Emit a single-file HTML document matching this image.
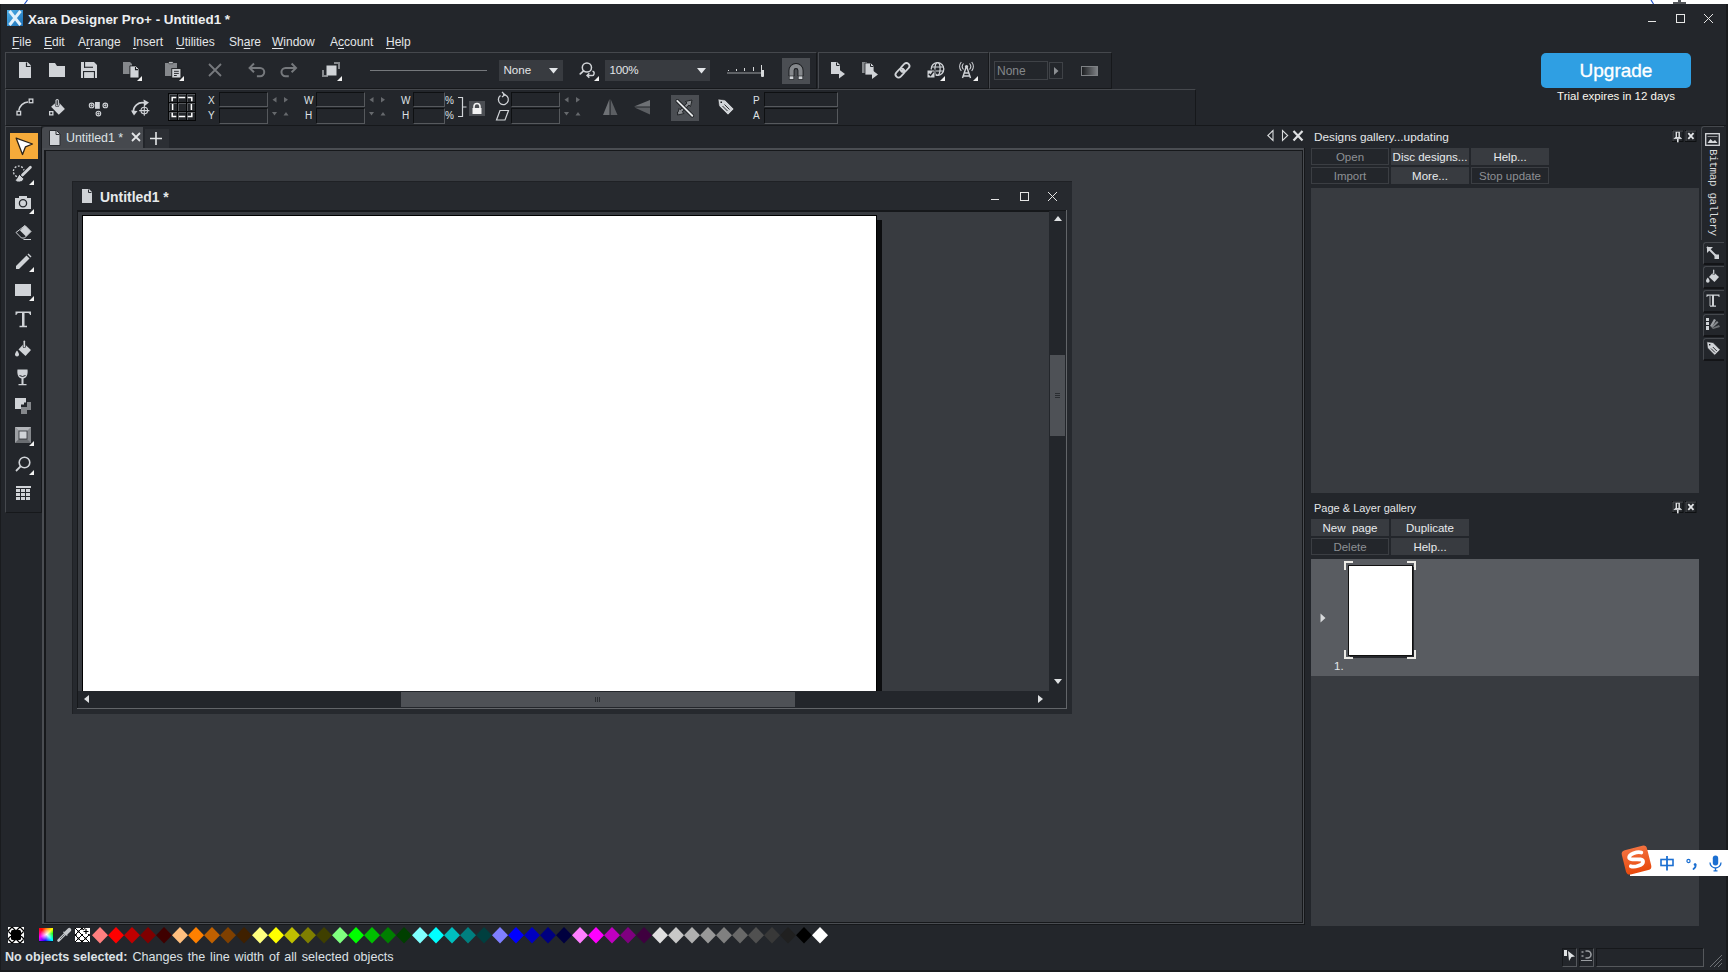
<!DOCTYPE html>
<html><head><meta charset="utf-8">
<style>
*{box-sizing:border-box;margin:0;padding:0}
html,body{width:1728px;height:972px;overflow:hidden;background:#23262b;font-family:"Liberation Sans",sans-serif;color:#dfe3e7}
.a{position:absolute}
.t{position:absolute;white-space:pre;line-height:1}
.fld{position:absolute;background:#23262b;border-top:1px solid #0e1012;border-left:1px solid #0e1012;border-bottom:1px solid #56595d;border-right:1px solid #56595d}
svg{position:absolute;overflow:visible}
.u{text-decoration:underline;text-underline-offset:2px;text-decoration-thickness:1px}
.btn{position:absolute;background:#383b40;font-size:11.5px;text-align:center;line-height:18.5px;color:#e8ebee;white-space:pre}
.dis{color:#8d9094;background:#23262b;border:1px solid #3b3e43;line-height:16.5px}
.lt{background:#4a4d52}
</style></head><body>

<div class="a" style="left:0;top:0;width:1728px;height:4px;background:#fff"></div>
<svg style="left:0;top:0" width="1728" height="4"><path d="M24.5 4L27.5 0M1651 0L1653.5 4" stroke="#2456c8" stroke-width="1.2"/><rect x="1673" y="2" width="13" height="2" fill="#55585c"/><rect x="1678" y="0" width="3" height="2" fill="#55585c"/></svg>
<div class="a" style="left:0;top:4px;width:1px;height:968px;background:#191b1e"></div>
<div class="a" style="left:1726px;top:4px;width:2px;height:968px;background:#191b1e"></div>
<div class="a" style="left:0;top:970px;width:1728px;height:2px;background:#191b1e"></div>
<svg style="left:7px;top:10px" width="16" height="16"><defs><linearGradient id="lg" x1="0" y1="0" x2="1" y2="1"><stop offset="0" stop-color="#4fb0e8"/><stop offset="1" stop-color="#1b6fb6"/></linearGradient></defs>
<rect width="16" height="16" fill="url(#lg)"/><path d="M2.5 1 L8 8 L2.5 15 M13.5 1 L8 8 L13.5 15" stroke="#e2f1fb" stroke-width="3" fill="none"/></svg>
<div class="t" style="left:28px;top:12.5px;font-size:13.4px;font-weight:bold;color:#eceef0">Xara Designer Pro+ - Untitled1 *</div>
<div class="a" style="left:1648px;top:21px;width:8px;height:1px;background:#e6e6e6"></div>
<div class="a" style="left:1676px;top:14px;width:9px;height:9px;border:1px solid #e6e6e6"></div>
<svg style="left:1704px;top:14px" width="9" height="9"><path d="M0 0L9 9M9 0L0 9" stroke="#e6e6e6" stroke-width="1"/></svg>
<div class="t" style="left:12px;top:36px;font-size:12px;color:#e3e6e9"><span class="u">F</span>ile</div>
<div class="t" style="left:44px;top:36px;font-size:12px;color:#e3e6e9"><span class="u">E</span>dit</div>
<div class="t" style="left:78px;top:36px;font-size:12px;color:#e3e6e9">A<span class="u">r</span>range</div>
<div class="t" style="left:133px;top:36px;font-size:12px;color:#e3e6e9"><span class="u">I</span>nsert</div>
<div class="t" style="left:176px;top:36px;font-size:12px;color:#e3e6e9"><span class="u">U</span>tilities</div>
<div class="t" style="left:229px;top:36px;font-size:12px;color:#e3e6e9">Sh<span class="u">a</span>re</div>
<div class="t" style="left:272px;top:36px;font-size:12px;color:#e3e6e9"><span class="u">W</span>indow</div>
<div class="t" style="left:330px;top:36px;font-size:12px;color:#e3e6e9">A<span class="u">c</span>count</div>
<div class="t" style="left:386px;top:36px;font-size:12px;color:#e3e6e9"><span class="u">H</span>elp</div>
<div class="a" style="left:5px;top:52px;width:812px;height:37px;border-top:1px solid #45484d;border-left:1px solid #45484d;border-bottom:1px solid #16181b;border-right:1px solid #16181b"></div>
<div class="a" style="left:818px;top:52px;width:171px;height:37px;border-top:1px solid #45484d;border-left:1px solid #45484d;border-bottom:1px solid #16181b;border-right:1px solid #16181b"></div>
<div class="a" style="left:989px;top:52px;width:123px;height:37px;border-top:1px solid #45484d;border-left:1px solid #45484d;border-bottom:1px solid #16181b;border-right:1px solid #16181b"></div>
<div class="a" style="left:5px;top:89px;width:1191px;height:37px;border-top:1px solid #45484d;border-left:1px solid #45484d;border-bottom:1px solid #16181b;border-right:1px solid #16181b"></div>
<div class="a" style="left:1196px;top:125px;width:530px;height:1px;background:#16181b"></div>
<div class="a" style="left:1541px;top:53px;width:150px;height:35px;background:#2f9fe3;border-radius:5px"></div>
<div class="t" style="left:1541px;top:61px;width:150px;text-align:center;font-size:19px;color:#fff;-webkit-text-stroke:0.35px #fff">Upgrade</div>
<div class="t" style="left:1541px;top:91px;width:150px;text-align:center;font-size:11.5px;color:#fbf7ee">Trial expires in 12 days</div>
<div class="a" style="left:5px;top:126px;width:37px;height:387px;border-top:1px solid #45484d;border-left:1px solid #45484d;border-bottom:1px solid #16181b;border-right:1px solid #16181b"></div>
<div class="a" style="left:10px;top:133px;width:28px;height:26px;background:#f6ab3a"></div>
<svg style="left:15px;top:137px" width="19" height="19"><path d="M1.2 1.2L17.5 7L10.5 9.8L7.5 17.5Z" fill="#fff" stroke="#2a2218" stroke-width="1.3" stroke-linejoin="round"/></svg>
<svg style="left:13px;top:166px" width="20" height="18"><circle cx="5.8" cy="5.5" r="5.4" stroke="#d0d3d7" stroke-width="1.3" stroke-dasharray="1.9 1.5" fill="none"/><path d="M9 9.6L17.6 1.1" stroke="#23262b" stroke-width="4.8" stroke-linecap="round"/><path d="M9.5 9.1L17.4 1.3" stroke="#d0d3d7" stroke-width="2.8" stroke-linecap="round"/><path d="M6.4 8.4L10.8 12.8C10.2 15.5 7 16.5 4.5 15.9L1.8 14.3C4 13.5 4.3 10.5 6.4 8.4Z" fill="#d0d3d7" stroke="#23262b" stroke-width="0.9"/></svg><svg style="left:29px;top:180px" width="5" height="5"><path d="M5 0V5H0Z" fill="#f2f2f2"/></svg>
<svg style="left:15px;top:196px" width="17" height="14"><path d="M4 0H12V2H16V13H0V2H4Z" fill="#d0d3d7"/><circle cx="8" cy="7.3" r="3.6" stroke="#23262b" stroke-width="1.3" fill="none"/></svg><svg style="left:29px;top:209px" width="5" height="5"><path d="M5 0V5H0Z" fill="#f2f2f2"/></svg>
<svg style="left:15px;top:225px" width="17" height="16"><path d="M10 0.5L16 6.5L9.5 13H6.5L1 7.5Z" fill="none" stroke="#d0d3d7" stroke-width="1"/><path d="M10 0.5L16 6.5L11 11.5L5 5.5Z" fill="#d0d3d7"/><path d="M8.5 14.5H16" stroke="#d0d3d7" stroke-width="1"/></svg>
<svg style="left:15px;top:253px" width="17" height="17"><path d="M1 13L11.5 2.5L14.5 5.5L4 16H1Z" fill="#d0d3d7"/><path d="M12.5 1.5L13.5 0.5L16.5 3.5L15.5 4.5Z" fill="#d0d3d7"/></svg><svg style="left:29px;top:267px" width="5" height="5"><path d="M5 0V5H0Z" fill="#f2f2f2"/></svg>
<svg style="left:15px;top:284px" width="17" height="13"><rect x="0" y="0" width="16" height="12" fill="#d0d3d7"/></svg><svg style="left:29px;top:296px" width="5" height="5"><path d="M5 0V5H0Z" fill="#f2f2f2"/></svg>
<svg style="left:15px;top:311px" width="17" height="17"><path d="M0.5 0.5H16V4H15C14.8 2.5 14 2 12 2H9.5V14.8H12V16.3H4.5V14.8H7V2H4.5C2.5 2 1.7 2.5 1.5 4H0.5Z" fill="#d0d3d7"/></svg>
<svg style="left:15px;top:340px" width="17" height="17"><path d="M9 3.5L16 10L10.5 16L3.5 9.5Z" fill="#d0d3d7"/><rect x="7.8" y="0" width="3" height="8" rx="1.5" fill="#23262b"/><rect x="8.5" y="0.5" width="1.6" height="7" rx="0.8" fill="#d0d3d7"/><path d="M2 10.5C0.5 12.5 0 13.5 0 14.5A2 2 0 0 0 4 14.5C4 13.5 3.5 12.5 2 10.5Z" fill="#d0d3d7"/></svg>
<svg style="left:17px;top:369px" width="12" height="17"><path d="M0.5 0.5H10.5C11 4 10.5 8.5 6.5 9.5V15H9.5V16.3H1.5V15H4.5V9.5C0.5 8.5 0 4 0.5 0.5Z" fill="#d0d3d7"/><path d="M2.5 6.5Q5.5 8.5 8.5 6.5" stroke="#23262b" stroke-width="1" fill="none"/></svg>
<svg style="left:15px;top:398px" width="17" height="17"><path d="M6 9H12V4H16V12H12V16H6Z" fill="#85888c"/><path d="M0 0H11V4.5H9V6.5H6V11H0Z" fill="#d0d3d7"/></svg>
<svg style="left:15px;top:427px" width="17" height="17"><rect x="0" y="0" width="16" height="16" fill="#85888c"/><path d="M0 0L16 0L12 4H4Z" fill="#b3b6ba"/><path d="M0 0L4 4V12L0 16Z" fill="#9da0a4"/><path d="M0 16L4 12H12L16 16Z" fill="#6a6d71"/><rect x="4" y="4" width="8" height="8" fill="#d0d3d7" stroke="#2c2f33" stroke-width="0.8"/></svg><svg style="left:29px;top:441px" width="5" height="5"><path d="M5 0V5H0Z" fill="#f2f2f2"/></svg>
<svg style="left:15px;top:456px" width="17" height="17"><circle cx="9.5" cy="6.5" r="5.3" stroke="#d0d3d7" stroke-width="1.6" fill="none"/><path d="M5.8 10.2L1 15" stroke="#d0d3d7" stroke-width="1.8"/></svg><svg style="left:29px;top:470px" width="5" height="5"><path d="M5 0V5H0Z" fill="#f2f2f2"/></svg>
<svg style="left:16px;top:486px" width="15" height="15"><rect x="0" y="0" width="15" height="2" fill="#d0d3d7"/><rect x="0" y="3" width="4" height="3" fill="#d0d3d7"/><rect x="5" y="3" width="4" height="3" fill="#d0d3d7"/><rect x="10" y="3" width="4" height="3" fill="#d0d3d7"/><rect x="0" y="7" width="4" height="3" fill="#d0d3d7"/><rect x="5" y="7" width="4" height="3" fill="#d0d3d7"/><rect x="10" y="7" width="4" height="3" fill="#d0d3d7"/><rect x="0" y="11" width="4" height="3" fill="#d0d3d7"/><rect x="5" y="11" width="4" height="3" fill="#d0d3d7"/><rect x="10" y="11" width="4" height="3" fill="#d0d3d7"/></svg>
<div class="a" style="left:42px;top:127px;width:101px;height:22px;background:#46494e;border-radius:3px 0 0 0"></div>
<svg style="left:49px;top:130px" width="12" height="16"><path d="M0.5 0.5H7.5L11 4V15.5H0.5Z" fill="#d0d3d7" stroke="#2a2d31" stroke-width="1"/><path d="M7 1V4.5H10.5" stroke="#2a2d31" stroke-width="1" fill="none"/></svg>
<div class="t" style="left:66px;top:131.5px;font-size:12.4px;color:#dde1e5">Untitled1 *</div>
<svg style="left:131px;top:132px" width="10" height="10"><path d="M1 1L9 9M9 1L1 9" stroke="#e3e5e7" stroke-width="1.8"/></svg>
<div class="a" style="left:145px;top:129px;width:24px;height:20px;background:#2c2f34"></div>
<svg style="left:150px;top:132px" width="12" height="13"><path d="M6 0V13M0 6.5H12" stroke="#e3e5e7" stroke-width="1.6"/></svg>
<svg style="left:1267px;top:130px" width="40" height="12"><path d="M6 0.5V10.5L0.8 5.5Z" stroke="#d8dadc" stroke-width="1.1" fill="none"/><path d="M15.5 0.5V10.5L20.7 5.5Z" stroke="#d8dadc" stroke-width="1.1" fill="none"/><path d="M26.5 1L35.5 10.5M35.5 1L26.5 10.5" stroke="#dfe1e3" stroke-width="2.2"/></svg>
<div class="a" style="left:42px;top:148px;width:1263px;height:777px;background:#16181b"></div>
<div class="a" style="left:42px;top:148px;width:1262px;height:776px;background:#4a4d52"></div>
<div class="a" style="left:44px;top:150px;width:1259px;height:773px;background:#16181b"></div>
<div class="a" style="left:46px;top:151px;width:1256px;height:771px;background:#383b40"></div>
<div class="a" style="left:72px;top:181px;width:1000px;height:533px;background:#26292e;border-top:1px solid #1f2125;border-left:1px solid #1f2125"></div>
<svg style="left:82px;top:189px" width="11" height="15"><path d="M0 0H7L10 3V14H0Z" fill="#d0d3d7"/><path d="M6.5 0.5V3.5H9.5" stroke="#2a2d32" stroke-width="1" fill="none"/></svg>
<div class="t" style="left:100px;top:190.5px;font-size:13.9px;font-weight:bold;color:#e6e9ec">Untitled1 *</div>
<div class="a" style="left:991px;top:199px;width:8px;height:1px;background:#e6e6e6"></div>
<div class="a" style="left:1020px;top:192px;width:9px;height:9px;border:1px solid #e6e6e6"></div>
<svg style="left:1048px;top:192px" width="9" height="9"><path d="M0 0L9 9M9 0L0 9" stroke="#e6e6e6" stroke-width="1"/></svg>
<div class="a" style="left:77px;top:210px;width:990px;height:499px;background:#626569"></div>
<div class="a" style="left:77px;top:210px;width:989px;height:498px;background:#16181b"></div>
<div class="a" style="left:78px;top:212px;width:988px;height:496px;background:#383b40"></div>
<div class="a" style="left:877px;top:220px;width:5px;height:471px;background:#0c0d0f"></div>
<div class="a" style="left:82px;top:215px;width:795px;height:476px;background:#fff;border-left:1px solid #000;border-top:1px solid #000;border-right:1px solid #000"></div>
<div class="a" style="left:1049px;top:211px;width:17px;height:480px;background:#23262b"></div>
<div class="a" style="left:78px;top:691px;width:988px;height:17px;background:#23262b"></div>
<div class="a" style="left:1050px;top:355px;width:15px;height:81px;background:#4e5156"></div>
<svg style="left:1055px;top:393px" width="5" height="6"><path d="M0 0.5H5M0 2.5H5M0 4.5H5" stroke="#2a2d31" stroke-width="1"/></svg>
<div class="a" style="left:401px;top:692px;width:394px;height:15px;background:#4e5156"></div>
<svg style="left:595px;top:697px" width="6" height="5"><path d="M0.5 0V5M2.5 0V5M4.5 0V5" stroke="#2a2d31" stroke-width="1"/></svg>
<svg style="left:1054px;top:216px" width="8" height="6"><path d="M0 5H8L4 0Z" fill="#dfe1e3"/></svg>
<svg style="left:1054px;top:679px" width="8" height="6"><path d="M0 0H8L4 5Z" fill="#dfe1e3"/></svg>
<svg style="left:84px;top:695px" width="6" height="8"><path d="M5 0V8L0 4Z" fill="#dfe1e3"/></svg>
<svg style="left:1038px;top:695px" width="6" height="8"><path d="M0 0V8L5 4Z" fill="#dfe1e3"/></svg>
<svg style="left:19px;top:62px" width="13" height="16"><path d="M0 0H8.5L12 3.5V16H0Z" fill="#d0d3d7"/><path d="M7.5 0.5V4.5H11.5" stroke="#23262b" stroke-width="1.2" fill="none"/></svg>
<svg style="left:49px;top:63px" width="16" height="15"><path d="M0 0H6L8 3H16V14H0Z" fill="#d0d3d7"/></svg>
<svg style="left:81px;top:62px" width="16" height="16"><path d="M0 0H13L16 3V16H0Z" fill="#d0d3d7"/><rect x="3" y="0" width="1.1" height="5.7" fill="#23262b"/><rect x="3" y="4.7" width="9" height="1.1" fill="#23262b"/><rect x="2" y="9" width="12" height="1.1" fill="#23262b"/><rect x="2" y="9" width="1.1" height="7" fill="#23262b"/><rect x="12.9" y="9" width="1.1" height="7" fill="#23262b"/></svg>
<svg style="left:123px;top:62px" width="17" height="17"><path d="M0 0H7L9 2V12H0Z" fill="#85888c"/><path d="M3.2 0.5V3.2" stroke="#23262b" stroke-width="0"/><path d="M6.9 3.9H13L16 6.9V16H6.9Z" fill="#d0d3d7" stroke="#17191c" stroke-width="0.9"/><path d="M12.5 5V7.6H15" stroke="#17191c" stroke-width="1.1" fill="none"/></svg><svg style="left:137px;top:76px" width="5" height="5"><path d="M5 0V5H0Z" fill="#f2f2f2"/></svg>
<svg style="left:165px;top:62px" width="17" height="17"><rect x="0" y="1" width="12" height="13" fill="#85888c"/><rect x="3.6" y="-0.3" width="4.6" height="2" rx="0.8" fill="#d0d3d7" stroke="#17191c" stroke-width="0.6"/><rect x="6.75" y="6.6" width="9.2" height="9.4" fill="#d0d3d7" stroke="#17191c" stroke-width="0.9"/><path d="M9 9.3H13.8M9 11.4H13.8M9 13.5H11.8" stroke="#17191c" stroke-width="0.9"/></svg><svg style="left:179px;top:76px" width="5" height="5"><path d="M5 0V5H0Z" fill="#f2f2f2"/></svg>
<svg style="left:208px;top:63px" width="14" height="14"><path d="M1 1L13 13M13 1L1 13" stroke="#76797d" stroke-width="1.8"/></svg>
<svg style="left:244px;top:58px" width="60" height="24"><path d="M10 5.5L5.6 9.9L10 14.3M5.6 9.9H16.1A4.15 4.15 0 0 1 16.1 18.2H12.9" stroke="#76797d" stroke-width="2" fill="none"/><path d="M47.6 5.5L52 9.9L47.6 14.3M52 9.9H41.6A4.15 4.15 0 0 0 41.6 18.2H44.8" stroke="#76797d" stroke-width="2" fill="none"/></svg>
<svg style="left:323px;top:62px" width="19" height="19"><path d="M0 8V14H5" stroke="#85888c" stroke-width="2" fill="none"/><path d="M11 1H16V7" stroke="#85888c" stroke-width="2" fill="none"/><rect x="3.5" y="3.5" width="10" height="10" fill="#d0d3d7"/></svg><svg style="left:337px;top:76px" width="5" height="5"><path d="M5 0V5H0Z" fill="#f2f2f2"/></svg>
<div class="a" style="left:370px;top:70px;width:117px;height:1px;background:#75787c"></div>
<div class="a" style="left:499px;top:60px;width:64px;height:21px;background:#383b40"></div>
<div class="t" style="left:503.5px;top:63.8px;font-size:11.6px;color:#e3e6e9">None</div>
<svg style="left:549px;top:68px" width="9" height="6"><path d="M0 0H9L4.5 5.5Z" fill="#e3e6e9"/></svg>
<svg style="left:578px;top:60px" width="20" height="20"><circle cx="8.9" cy="7.5" r="4.6" stroke="#d0d3d7" stroke-width="1.5" fill="none"/><path d="M5.6 10.8L2.3 13.8" stroke="#d0d3d7" stroke-width="1.8" stroke-linecap="round"/><path d="M14.5 11.2A2.2 2.2 0 0 1 13.3 15.5H9.5M11.3 13.3L9 15.5L11.3 17.7" stroke="#d0d3d7" stroke-width="1.4" fill="none"/></svg><svg style="left:594px;top:76px" width="5" height="5"><path d="M5 0V5H0Z" fill="#f2f2f2"/></svg>
<div class="a" style="left:605px;top:60px;width:105px;height:21px;background:#383b40"></div>
<div class="t" style="left:609.5px;top:63.8px;font-size:11.6px;color:#e3e6e9;letter-spacing:-0.2px">100%</div>
<svg style="left:697px;top:68px" width="9" height="6"><path d="M0 0H9L4.5 5.5Z" fill="#e3e6e9"/></svg>
<div class="a" style="left:727px;top:72px;width:35px;height:2px;background:#5e6165"></div>
<div class="a" style="left:728px;top:70px;width:1px;height:1px;background:#d8dadc"></div>
<div class="a" style="left:736px;top:69px;width:1px;height:2px;background:#d8dadc"></div>
<div class="a" style="left:744px;top:68px;width:1px;height:3px;background:#d8dadc"></div>
<div class="a" style="left:753px;top:67px;width:1px;height:4px;background:#d8dadc"></div>
<div class="a" style="left:761px;top:65px;width:1px;height:5px;background:#d8dadc"></div>
<div class="a" style="left:761px;top:70px;width:3px;height:7px;background:#d8dadc;border-radius:0 0 1px 1px"></div>
<div class="a" style="left:782px;top:58px;width:28px;height:26px;background:#4b4e53"></div>
<svg style="left:787px;top:62px" width="18" height="18"><path d="M4.5 14V8.5A4.5 4.5 0 0 1 13.5 8.5V14" stroke="#17191c" stroke-width="6" fill="none"/><path d="M4.5 14V8.5A4.5 4.5 0 0 1 13.5 8.5V14" stroke="#85888c" stroke-width="4.2" fill="none"/><rect x="2.2" y="14" width="4.6" height="3.3" fill="#d0d3d7" stroke="#17191c" stroke-width="0.6"/><rect x="11.2" y="14" width="4.6" height="3.3" fill="#d0d3d7" stroke="#17191c" stroke-width="0.6"/></svg>
<svg style="left:831px;top:62px" width="15" height="17"><path d="M0 0H6L9 3V12H0Z" fill="#d0d3d7"/><path d="M5.5 0.5V3.5H8.5" stroke="#23262b" stroke-width="1" fill="none"/><path d="M8 7.5L14 12L8 16.5Z" fill="#d0d3d7"/></svg>
<svg style="left:862px;top:62px" width="16" height="17"><path d="M0 0H5V11H0Z" fill="#85888c"/><path d="M3 1H9L12 4V13H3Z" fill="#d0d3d7" stroke="#23262b" stroke-width="0.8"/><path d="M8.5 1.5V4.5H11.5" stroke="#23262b" stroke-width="1" fill="none"/><path d="M10 8L16 12.5L10 17Z" fill="#d0d3d7"/></svg>
<svg style="left:894px;top:62px" width="17" height="17"><path d="M7 10L10 7" stroke="#d0d3d7" stroke-width="1.8"/><rect x="8" y="0.5" width="6" height="10" rx="3" transform="rotate(45 11 5.5)" stroke="#d0d3d7" stroke-width="1.8" fill="none"/><rect x="3" y="6" width="6" height="10" rx="3" transform="rotate(45 6 11)" stroke="#d0d3d7" stroke-width="1.8" fill="none"/></svg>
<svg style="left:927px;top:62px" width="17" height="17"><circle cx="10.5" cy="7" r="6.3" stroke="#d0d3d7" stroke-width="1.3" fill="none"/><ellipse cx="10.5" cy="7" rx="2.6" ry="6.3" stroke="#d0d3d7" stroke-width="1.2" fill="none"/><path d="M4.2 5H16.8M4.2 9H16.8" stroke="#d0d3d7" stroke-width="1.2"/><rect x="0" y="8" width="8" height="8" fill="#d0d3d7" stroke="#23262b" stroke-width="1"/><path d="M1.8 11.8L3.5 13.5L6.5 9.5" stroke="#23262b" stroke-width="1.4" fill="none"/></svg><svg style="left:940px;top:76px" width="5" height="5"><path d="M5 0V5H0Z" fill="#f2f2f2"/></svg>
<svg style="left:959px;top:62px" width="15" height="17"><path d="M7.5 4L3.5 16M7.5 4L11.5 16M5.2 11H9.8M4.3 14H10.7" stroke="#d0d3d7" stroke-width="1.4" fill="none"/><circle cx="7.5" cy="4.5" r="1.6" fill="#d0d3d7"/><path d="M4.5 1.5A4.5 4.5 0 0 0 4.5 7.5M10.5 1.5A4.5 4.5 0 0 1 10.5 7.5M2.3 0A7 7 0 0 0 2.3 9M12.7 0A7 7 0 0 1 12.7 9" stroke="#d0d3d7" stroke-width="1.1" fill="none"/></svg><svg style="left:973px;top:76px" width="5" height="5"><path d="M5 0V5H0Z" fill="#f2f2f2"/></svg>
<div class="a" style="left:994px;top:61px;width:54px;height:19px;border:1px solid #3f4247"></div>
<div class="t" style="left:997px;top:65px;font-size:12px;color:#85888c">None</div>
<div class="a" style="left:1049px;top:62px;width:14px;height:17px;border:1px solid #3f4247"></div>
<svg style="left:1054px;top:67px" width="5" height="8"><path d="M0 0L4.5 4L0 8Z" fill="#8c8f93"/></svg>
<div class="a" style="left:1081px;top:66px;width:17px;height:10px;border:1px solid #7e8185;background:linear-gradient(90deg,#1c1e21,#7c7f83)"></div>
<svg style="left:16px;top:98px" width="18" height="18"><path d="M2.8 12.5A10 10 0 0 1 12 4" stroke="#d0d3d7" stroke-width="1.6" fill="none"/><rect x="1" y="13.3" width="3.6" height="3.6" stroke="#d0d3d7" stroke-width="1.3" fill="#23262b"/><rect x="13.2" y="1.1" width="3.6" height="3.6" stroke="#d0d3d7" stroke-width="1.3" fill="#23262b"/></svg>
<svg style="left:48px;top:98px" width="18" height="18"><path d="M3.1 8.8L9.6 3L16.9 11L10.8 16.7Z" fill="#d0d3d7"/><rect x="6.9" y="0.3" width="4.6" height="8.8" rx="2.3" fill="#23262b"/><rect x="7.5" y="0.9" width="3.4" height="7.6" rx="1.7" fill="#d0d3d7"/><rect x="8.6" y="2.1" width="1.2" height="5.3" rx="0.6" fill="#23262b"/><rect x="1.65" y="13.65" width="3.2" height="3.2" stroke="#d0d3d7" stroke-width="1.3" fill="#23262b"/></svg>
<svg style="left:89px;top:100px" width="20" height="17"><rect x="6" y="2" width="4.8" height="6.8" fill="#d0d3d7"/><circle cx="2.6" cy="5.4" r="2.3" stroke="#d0d3d7" stroke-width="1.1" fill="#23262b"/><path d="M1.3 5.4H3.9000000000000004M2.6 4.1000000000000005V6.7" stroke="#d0d3d7" stroke-width="0.9"/><circle cx="16.3" cy="5.4" r="2.3" stroke="#d0d3d7" stroke-width="1.1" fill="#23262b"/><path d="M15.0 5.4H17.6M16.3 4.1000000000000005V6.7" stroke="#d0d3d7" stroke-width="0.9"/><circle cx="9.4" cy="13.6" r="2.3" stroke="#d0d3d7" stroke-width="1.1" fill="#23262b"/><path d="M8.1 13.6H10.700000000000001M9.4 12.299999999999999V14.9" stroke="#d0d3d7" stroke-width="0.9"/></svg>
<svg style="left:131px;top:98px" width="20" height="19"><path d="M2.5 15A9 9 0 0 1 14 5" stroke="#d0d3d7" stroke-width="1.8" fill="none"/><path d="M12.5 1.5L18 4.5L13 8.5Z" fill="#d0d3d7"/><path d="M0 12.5L3 17.5L6.5 13Z" fill="#d0d3d7"/><circle cx="13.3" cy="12.6" r="3.3" stroke="#d0d3d7" stroke-width="1.1" fill="none"/><path d="M13.3 7.5V17.7M8.2 12.6H18.4" stroke="#d0d3d7" stroke-width="1.1"/></svg>
<svg style="left:168px;top:93px" width="28" height="28"><rect width="28" height="28" fill="#050607"/><rect x="1" y="1" width="8" height="8" fill="#24272b"/><path d="M1.5 9V1.5H9" stroke="#55585c" stroke-width="1" fill="none"/><rect x="10" y="1" width="8" height="8" fill="#24272b"/><path d="M10.5 9V1.5H18" stroke="#55585c" stroke-width="1" fill="none"/><rect x="19" y="1" width="8" height="8" fill="#24272b"/><path d="M19.5 9V1.5H27" stroke="#55585c" stroke-width="1" fill="none"/><rect x="1" y="10" width="8" height="8" fill="#24272b"/><path d="M1.5 18V10.5H9" stroke="#55585c" stroke-width="1" fill="none"/><rect x="10" y="10" width="8" height="8" fill="#24272b"/><path d="M10.5 18V10.5H18" stroke="#55585c" stroke-width="1" fill="none"/><rect x="19" y="10" width="8" height="8" fill="#24272b"/><path d="M19.5 18V10.5H27" stroke="#55585c" stroke-width="1" fill="none"/><rect x="1" y="19" width="8" height="8" fill="#24272b"/><path d="M1.5 27V19.5H9" stroke="#55585c" stroke-width="1" fill="none"/><rect x="10" y="19" width="8" height="8" fill="#24272b"/><path d="M10.5 27V19.5H18" stroke="#55585c" stroke-width="1" fill="none"/><rect x="19" y="19" width="8" height="8" fill="#24272b"/><path d="M19.5 27V19.5H27" stroke="#55585c" stroke-width="1" fill="none"/><path d="M4.2 8.2V4.4H8.3M10.8 4.4H17.2M19.7 4.4H23.8V8.2M4.6 10.9V17.1M23.4 10.9V17.1M4.2 19.8V23.6H8.3M10.8 23.6H17.2M19.7 23.6H23.8V19.8" stroke="#fff" stroke-width="1.5" fill="none"/></svg>
<div class="t" style="left:208px;top:96px;font-size:10px;font-weight:normal;color:#dfe2e5">X</div>
<div class="t" style="left:208px;top:111px;font-size:10px;font-weight:normal;color:#dfe2e5">Y</div>
<div class="fld" style="left:219px;top:92px;width:49px;height:15px"></div>
<div class="fld" style="left:219px;top:108px;width:49px;height:16px"></div>
<svg style="left:272px;top:96px" width="17" height="21"><path d="M4.5 1V6.5L0.5 3.75Z" fill="#66696d"/><path d="M12 1V6.5L16 3.75Z" fill="#66696d"/><path d="M0 16H5L2.5 19.5Z" fill="#66696d"/><path d="M11.5 19.5H16.5L14 16Z" fill="#66696d"/></svg>
<div class="t" style="left:304px;top:96px;font-size:10px;font-weight:normal;color:#dfe2e5">W</div>
<div class="t" style="left:305px;top:111px;font-size:10px;font-weight:normal;color:#dfe2e5">H</div>
<div class="fld" style="left:316px;top:92px;width:49px;height:15px"></div>
<div class="fld" style="left:316px;top:108px;width:49px;height:16px"></div>
<svg style="left:369px;top:96px" width="17" height="21"><path d="M4.5 1V6.5L0.5 3.75Z" fill="#66696d"/><path d="M12 1V6.5L16 3.75Z" fill="#66696d"/><path d="M0 16H5L2.5 19.5Z" fill="#66696d"/><path d="M11.5 19.5H16.5L14 16Z" fill="#66696d"/></svg>
<div class="t" style="left:401px;top:96px;font-size:10px;font-weight:normal;color:#dfe2e5">W</div>
<div class="t" style="left:402px;top:111px;font-size:10px;font-weight:normal;color:#dfe2e5">H</div>
<div class="fld" style="left:413px;top:92px;width:32px;height:15px"></div>
<div class="fld" style="left:413px;top:108px;width:32px;height:16px"></div>
<div class="t" style="left:445px;top:96px;font-size:10px;font-weight:normal;color:#dfe2e5">%</div>
<div class="t" style="left:445px;top:111px;font-size:10px;font-weight:normal;color:#dfe2e5">%</div>
<svg style="left:458px;top:97px" width="10" height="21"><path d="M0 0.5H4.5V19.5H0M4.5 10H8.5" stroke="#d0d3d7" stroke-width="1.2" fill="none"/></svg>
<div class="a" style="left:469px;top:101px;width:16px;height:15px;background:#4b4e53"></div>
<svg style="left:471px;top:103px" width="12" height="11"><path d="M3 5V3.5A3 3 0 0 1 9 3.5V5" stroke="#f2f2f2" stroke-width="1.6" fill="none"/><rect x="1.5" y="5" width="9" height="6" fill="#f2f2f2"/></svg>
<svg style="left:496px;top:92px" width="14" height="30"><path d="M4.5 3.5A5 5 0 1 0 7 2.6" stroke="#d0d3d7" stroke-width="1.3" fill="none"/><path d="M6 0L8.8 2.7L6 5" stroke="#d0d3d7" stroke-width="1.3" fill="none"/><path d="M4 18.5H12.5L9 28H0.5Z" stroke="#d0d3d7" stroke-width="1.2" fill="none"/></svg>
<div class="fld" style="left:511px;top:92px;width:49px;height:15px"></div>
<div class="fld" style="left:511px;top:108px;width:49px;height:16px"></div>
<svg style="left:564px;top:96px" width="17" height="21"><path d="M4.5 1V6.5L0.5 3.75Z" fill="#66696d"/><path d="M12 1V6.5L16 3.75Z" fill="#66696d"/><path d="M0 16H5L2.5 19.5Z" fill="#66696d"/><path d="M11.5 19.5H16.5L14 16Z" fill="#66696d"/></svg>
<svg style="left:602px;top:99px" width="17" height="17"><path d="M7.5 0V16H1Z" fill="#6e7175"/><path d="M8.6 0V16H15.5Z" fill="#5c5f63"/></svg>
<svg style="left:634px;top:99px" width="17" height="17"><path d="M16 7.5H0L16 1Z" fill="#6e7175"/><path d="M16 8.6H0.5L16 15.5Z" fill="#5c5f63"/></svg>
<div class="a" style="left:671px;top:95px;width:28px;height:26px;background:#4b4e53"></div>
<svg style="left:671px;top:95px" width="28" height="26"><path d="M13.5 12.5L20 6M7 19L12 14" stroke="#17191c" stroke-width="3.6"/><path d="M21 5L14.5 6.5L19.5 11.5Z" fill="#8c8f93" stroke="#17191c" stroke-width="0.8"/><path d="M6.5 20L8 13.5L13 18.5Z" fill="#8c8f93" stroke="#17191c" stroke-width="0.8"/><path d="M13.5 12.5L19 7M7.5 18.5L12 14" stroke="#8c8f93" stroke-width="2.2"/><path d="M6.3 5.9L21.3 20.7" stroke="#17191c" stroke-width="3.6" stroke-linecap="round"/><path d="M6.3 5.9L21.3 20.7" stroke="#e4e6e8" stroke-width="2" stroke-linecap="round"/></svg>
<svg style="left:717px;top:98px" width="18" height="18"><path d="M1 1L8 2L17 11L11 17L2 8Z" fill="#d0d3d7" stroke="#17191c" stroke-width="0.6"/><rect x="3.5" y="3.5" width="1.5" height="1.5" fill="#17191c"/><path d="M5.5 8L10.5 13M7.5 6.5L12.5 11.5" stroke="#17191c" stroke-width="0.9"/></svg>
<div class="t" style="left:753px;top:96px;font-size:10px;font-weight:normal;color:#dfe2e5">P</div>
<div class="t" style="left:753px;top:111px;font-size:10px;font-weight:normal;color:#dfe2e5">A</div>
<div class="fld" style="left:764px;top:92px;width:74px;height:15px"></div>
<div class="fld" style="left:764px;top:108px;width:74px;height:16px"></div>
<div class="t" style="left:1314px;top:132px;font-size:11.8px;color:#e3e6e9">Designs gallery...updating</div>
<svg style="left:1672px;top:130px" width="26" height="13"><rect x="0.5" y="0.5" width="10.5" height="11" fill="#25282c" stroke="#0e1012" stroke-width="1"/><path d="M1 11V1H11" stroke="#4e5155" stroke-width="1" fill="none"/><rect x="13.5" y="0.5" width="10.5" height="11" fill="#25282c" stroke="#0e1012" stroke-width="1"/><path d="M14 11V1H24" stroke="#4e5155" stroke-width="1" fill="none"/><path d="M3.6 1.8H7.9V8H3.6Z" fill="#dfe1e3"/><rect x="5.1" y="2.6" width="1.3" height="5" fill="#0e1012"/><path d="M2 8.6H9.5L8.5 7.6H3Z" fill="#dfe1e3" stroke="#dfe1e3" stroke-width="0.8"/><rect x="5" y="9" width="1.6" height="3.3" fill="#dfe1e3"/><path d="M16.3 3.2L21.5 8.8M21.5 3.2L16.3 8.8" stroke="#e3e5e7" stroke-width="1.8"/></svg>
<div class="btn dis" style="left:1311px;top:148px;width:78px;height:17px">Open</div>
<div class="btn" style="left:1391px;top:148px;width:78px;height:17px">Disc designs...</div>
<div class="btn" style="left:1471px;top:148px;width:78px;height:17px">Help...</div>
<div class="btn dis" style="left:1311px;top:167px;width:78px;height:17px">Import</div>
<div class="btn" style="left:1391px;top:167px;width:78px;height:17px">More...</div>
<div class="btn dis" style="left:1471px;top:167px;width:78px;height:17px">Stop update</div>
<div class="a" style="left:1311px;top:188px;width:388px;height:305px;background:#383b40"></div>
<div class="t" style="left:1314px;top:503px;font-size:11px;color:#e3e6e9">Page &amp; Layer gallery</div>
<svg style="left:1672px;top:501px" width="26" height="13"><rect x="0.5" y="0.5" width="10.5" height="11" fill="#25282c" stroke="#0e1012" stroke-width="1"/><path d="M1 11V1H11" stroke="#4e5155" stroke-width="1" fill="none"/><rect x="13.5" y="0.5" width="10.5" height="11" fill="#25282c" stroke="#0e1012" stroke-width="1"/><path d="M14 11V1H24" stroke="#4e5155" stroke-width="1" fill="none"/><path d="M3.6 1.8H7.9V8H3.6Z" fill="#dfe1e3"/><rect x="5.1" y="2.6" width="1.3" height="5" fill="#0e1012"/><path d="M2 8.6H9.5L8.5 7.6H3Z" fill="#dfe1e3" stroke="#dfe1e3" stroke-width="0.8"/><rect x="5" y="9" width="1.6" height="3.3" fill="#dfe1e3"/><path d="M16.3 3.2L21.5 8.8M21.5 3.2L16.3 8.8" stroke="#e3e5e7" stroke-width="1.8"/></svg>
<div class="btn" style="left:1311px;top:519px;width:78px;height:17px">New  page</div>
<div class="btn" style="left:1391px;top:519px;width:78px;height:17px">Duplicate</div>
<div class="btn dis" style="left:1311px;top:538px;width:78px;height:17px">Delete</div>
<div class="btn" style="left:1391px;top:538px;width:78px;height:17px">Help...</div>
<div class="a" style="left:1311px;top:559px;width:388px;height:117px;background:#595c61"></div>
<div class="a" style="left:1311px;top:676px;width:388px;height:250px;background:#383b40"></div>
<svg style="left:1320px;top:613px" width="6" height="10"><path d="M0.5 0.5V9.5L5.5 5Z" fill="#d8dadc"/></svg>
<div class="a" style="left:1350px;top:567px;width:64px;height:91px;background:#25272b"></div>
<div class="a" style="left:1348px;top:565px;width:65px;height:91px;background:#fff;border:1px solid #111"></div>
<svg style="left:1344px;top:561px" width="73" height="99"><path d="M1 9V1H9M63 1H71V9M1 89V97H9M63 97H71V89" stroke="#ecebe6" stroke-width="2" fill="none"/></svg>
<div class="t" style="left:1334px;top:661px;font-size:11.5px;color:#e3e6e9">1.</div>
<div class="a" style="left:1701px;top:126px;width:23px;height:114px;background:#23262b;border-left:1px solid #45484d;border-top:1px solid #45484d;border-radius:3px 0 0 0"></div>
<svg style="left:1705px;top:133px" width="15" height="13"><rect x="0.7" y="0.7" width="13.6" height="11.6" stroke="#d8dadc" stroke-width="1.3" fill="none"/><path d="M2.5 10L5.5 6L8 8.5L10 7L12.5 10Z" fill="#d8dadc"/><path d="M2.5 3.5H12.5" stroke="#d8dadc" stroke-width="0.6"/></svg>
<div class="t" style="left:1717.5px;top:149px;font-family:'Liberation Mono',monospace;font-size:11px;color:#d8dadc;transform:rotate(90deg);transform-origin:0 0;letter-spacing:-0.4px">Bitmap gallery</div>
<div class="a" style="left:1703px;top:242px;width:21px;height:23px;border-left:1px solid #45484d;border-top:1px solid #45484d;border-bottom:2px solid #131417;border-radius:3px 0 0 0"></div>
<div class="a" style="left:1703px;top:266px;width:21px;height:23px;border-left:1px solid #45484d;border-top:1px solid #45484d;border-bottom:2px solid #131417;border-radius:3px 0 0 0"></div>
<div class="a" style="left:1703px;top:290px;width:21px;height:23px;border-left:1px solid #45484d;border-top:1px solid #45484d;border-bottom:2px solid #131417;border-radius:3px 0 0 0"></div>
<div class="a" style="left:1703px;top:314px;width:21px;height:23px;border-left:1px solid #45484d;border-top:1px solid #45484d;border-bottom:2px solid #131417;border-radius:3px 0 0 0"></div>
<div class="a" style="left:1703px;top:338px;width:21px;height:23px;border-left:1px solid #45484d;border-top:1px solid #45484d;border-bottom:2px solid #131417;border-radius:3px 0 0 0"></div>
<svg style="left:1706px;top:246px" width="14" height="14"><path d="M1 1L10 10" stroke="#d0d3d7" stroke-width="2"/><path d="M1 1H7L1 7Z" fill="#d0d3d7"/><rect x="8.5" y="8.5" width="4.5" height="4.5" fill="#d0d3d7"/></svg>
<svg style="left:1706px;top:269px" width="14" height="14"><path d="M7.5 3L13 8L8.5 13L3 8Z" fill="#d0d3d7"/><rect x="6.5" y="0" width="2.4" height="6" rx="1.2" fill="#23262b"/><rect x="7.1" y="0.4" width="1.2" height="5.3" rx="0.6" fill="#d0d3d7"/><path d="M1.8 8.5C0.5 10 0 11 0 12A1.8 1.8 0 0 0 3.6 12C3.6 11 3 10 1.8 8.5Z" fill="#d0d3d7"/></svg>
<svg style="left:1706px;top:294px" width="14" height="14"><path d="M0.5 0.5H13.5V3H12.8C12.5 2 12 1.8 10.5 1.8H8V11.5H10V12.8H4V11.5H6V1.8H3.5C2 1.8 1.5 2 1.2 3H0.5Z" fill="#d0d3d7"/><path d="M4 2V12" stroke="#d0d3d7" stroke-width="0.8"/></svg>
<svg style="left:1706px;top:317px" width="15" height="15"><rect x="0" y="1" width="3" height="3" fill="#d0d3d7"/><rect x="0" y="5" width="3" height="3" fill="#d0d3d7"/><rect x="0" y="9" width="3" height="4" fill="#d0d3d7"/><path d="M4 9L8 2L10 3L6 10Z" fill="#9da0a4"/><path d="M5 10L11 4L12.5 5.5L6.5 11Z" fill="#85888c"/><path d="M6 11L13 8L14 10L7 12Z" fill="#6d7074"/></svg>
<svg style="left:1706px;top:341px" width="15" height="15"><path d="M0.8 0.8L7 1.5L14.2 8.7L8.7 14.2L1.5 7Z" fill="#d0d3d7" stroke="#17191c" stroke-width="0.6"/><rect x="3" y="3" width="1.4" height="1.4" fill="#17191c"/><path d="M5 7.5L9 11.5M6.8 6L10.8 10" stroke="#17191c" stroke-width="0.9"/></svg>
<svg style="left:8px;top:927px" width="16" height="16"><rect width="16" height="16" fill="#fff"/><path d="M0 4L4 0M0 12L12 0M4 16L16 4M12 16L16 12M12 0L16 4M4 0L16 12M0 4L12 16M0 12L4 16" stroke="#000" stroke-width="1.3"/><rect x="3" y="3" width="10" height="10" rx="1.5" fill="#000"/></svg>
<div class="a" style="left:39px;top:928px;width:14px;height:14px;background:conic-gradient(from -45deg at 55% 50%,#f00,#ff0 25%,#0f0 35%,#0ff 50%,#00f 65%,#f0f 82%,#f00);border-bottom:1px solid #0b1a3a"></div>
<div class="a" style="left:39px;top:928px;width:14px;height:13px;background:radial-gradient(circle at 55% 50%,rgba(255,255,255,1) 0%,rgba(255,255,255,.6) 25%,rgba(255,255,255,0) 65%)"></div>
<svg style="left:57px;top:928px" width="15" height="15"><path d="M1.5 12.5L8.5 5.5" stroke="#c5c8cc" stroke-width="2.6" stroke-linecap="round"/><path d="M3 11L7.5 6.5" stroke="#5a5d61" stroke-width="0.9"/><path d="M6.5 3.8L10.3 7.6" stroke="#c5c8cc" stroke-width="1.4"/><path d="M9.5 4.6L12.3 1.8" stroke="#c5c8cc" stroke-width="4" stroke-linecap="round"/></svg>
<svg style="left:75px;top:928px" width="15" height="14"><rect width="15" height="14" fill="#fff"/><path d="M0 0L14 14M14 0L0 14M0 7L7 0L14 7L7 14Z" stroke="#000" stroke-width="1" fill="none"/><circle cx="7" cy="0.8" r="1.1"/><circle cx="0.8" cy="7" r="1.1"/><circle cx="14" cy="7" r="1.1"/><circle cx="7" cy="13.2" r="1.1"/><circle cx="3.5" cy="3.5" r="1"/><circle cx="3.5" cy="10.5" r="1"/><circle cx="10.5" cy="10.5" r="1"/><rect x="8" y="0" width="7" height="6" fill="#fff"/><path d="M8 2L10.5 0" stroke="#000" stroke-width="1"/><path d="M11 1V6M8.5 3.5H13.5" stroke="#000" stroke-width="1.2"/></svg>
<svg style="left:92px;top:927px" width="740" height="17"><path d="M8 0L16 8.2L8 16.4L0 8.2Z" fill="rgb(255,127,127)"/><path d="M24 0L32 8.2L24 16.4L16 8.2Z" fill="rgb(255,0,0)"/><path d="M40 0L48 8.2L40 16.4L32 8.2Z" fill="rgb(191,0,0)"/><path d="M56 0L64 8.2L56 16.4L48 8.2Z" fill="rgb(127,0,0)"/><path d="M72 0L80 8.2L72 16.4L64 8.2Z" fill="rgb(63,0,0)"/><path d="M88 0L96 8.2L88 16.4L80 8.2Z" fill="rgb(255,191,127)"/><path d="M104 0L112 8.2L104 16.4L96 8.2Z" fill="rgb(255,128,0)"/><path d="M120 0L128 8.2L120 16.4L112 8.2Z" fill="rgb(191,96,0)"/><path d="M136 0L144 8.2L136 16.4L128 8.2Z" fill="rgb(127,64,0)"/><path d="M152 0L160 8.2L152 16.4L144 8.2Z" fill="rgb(63,32,0)"/><path d="M168 0L176 8.2L168 16.4L160 8.2Z" fill="rgb(255,255,127)"/><path d="M184 0L192 8.2L184 16.4L176 8.2Z" fill="rgb(255,255,0)"/><path d="M200 0L208 8.2L200 16.4L192 8.2Z" fill="rgb(191,191,0)"/><path d="M216 0L224 8.2L216 16.4L208 8.2Z" fill="rgb(127,127,0)"/><path d="M232 0L240 8.2L232 16.4L224 8.2Z" fill="rgb(63,63,0)"/><path d="M248 0L256 8.2L248 16.4L240 8.2Z" fill="rgb(127,255,127)"/><path d="M264 0L272 8.2L264 16.4L256 8.2Z" fill="rgb(0,255,0)"/><path d="M280 0L288 8.2L280 16.4L272 8.2Z" fill="rgb(0,191,0)"/><path d="M296 0L304 8.2L296 16.4L288 8.2Z" fill="rgb(0,127,0)"/><path d="M312 0L320 8.2L312 16.4L304 8.2Z" fill="rgb(0,63,0)"/><path d="M328 0L336 8.2L328 16.4L320 8.2Z" fill="rgb(127,255,255)"/><path d="M344 0L352 8.2L344 16.4L336 8.2Z" fill="rgb(0,255,255)"/><path d="M360 0L368 8.2L360 16.4L352 8.2Z" fill="rgb(0,191,191)"/><path d="M376 0L384 8.2L376 16.4L368 8.2Z" fill="rgb(0,127,127)"/><path d="M392 0L400 8.2L392 16.4L384 8.2Z" fill="rgb(0,63,63)"/><path d="M408 0L416 8.2L408 16.4L400 8.2Z" fill="rgb(127,127,255)"/><path d="M424 0L432 8.2L424 16.4L416 8.2Z" fill="rgb(0,0,255)"/><path d="M440 0L448 8.2L440 16.4L432 8.2Z" fill="rgb(0,0,191)"/><path d="M456 0L464 8.2L456 16.4L448 8.2Z" fill="rgb(0,0,127)"/><path d="M472 0L480 8.2L472 16.4L464 8.2Z" fill="rgb(0,0,63)"/><path d="M488 0L496 8.2L488 16.4L480 8.2Z" fill="rgb(255,127,255)"/><path d="M504 0L512 8.2L504 16.4L496 8.2Z" fill="rgb(255,0,255)"/><path d="M520 0L528 8.2L520 16.4L512 8.2Z" fill="rgb(191,0,191)"/><path d="M536 0L544 8.2L536 16.4L528 8.2Z" fill="rgb(127,0,127)"/><path d="M552 0L560 8.2L552 16.4L544 8.2Z" fill="rgb(63,0,63)"/><path d="M568 0L576 8.2L568 16.4L560 8.2Z" fill="rgb(224,224,224)"/><path d="M584 0L592 8.2L584 16.4L576 8.2Z" fill="rgb(200,200,200)"/><path d="M600 0L608 8.2L600 16.4L592 8.2Z" fill="rgb(176,176,176)"/><path d="M616 0L624 8.2L616 16.4L608 8.2Z" fill="rgb(152,152,152)"/><path d="M632 0L640 8.2L632 16.4L624 8.2Z" fill="rgb(128,128,128)"/><path d="M648 0L656 8.2L648 16.4L640 8.2Z" fill="rgb(104,104,104)"/><path d="M664 0L672 8.2L664 16.4L656 8.2Z" fill="rgb(80,80,80)"/><path d="M680 0L688 8.2L680 16.4L672 8.2Z" fill="rgb(56,56,56)"/><path d="M696 0L704 8.2L696 16.4L688 8.2Z" fill="rgb(32,32,32)"/><path d="M712 0L720 8.2L712 16.4L704 8.2Z" fill="rgb(0,0,0)"/><path d="M728 0L736 8.2L728 16.4L720 8.2Z" fill="rgb(255,255,255)"/></svg>
<div class="t" style="left:5px;top:951px;font-size:12.6px;color:#dde1e5"><b>No objects selected:</b><span style="word-spacing:1.4px"> Changes the line width of all selected objects</span></div>
<div class="a" style="left:1562px;top:948px;width:15px;height:19px;border-top:1px solid #16181b;border-left:1px solid #16181b;border-bottom:1px solid #55585c;border-right:1px solid #55585c"></div>
<div class="a" style="left:1579px;top:948px;width:15px;height:19px;border-top:1px solid #16181b;border-left:1px solid #16181b;border-bottom:1px solid #55585c;border-right:1px solid #55585c"></div>
<div class="a" style="left:1596px;top:948px;width:108px;height:19px;border-top:1px solid #16181b;border-left:1px solid #16181b;border-bottom:1px solid #55585c;border-right:1px solid #55585c"></div>
<svg style="left:1564px;top:950px" width="12" height="11"><rect x="0" y="0" width="3" height="6" fill="#e0e2e4"/><path d="M4 1L11 6.5L7.5 7L5 11Z" fill="#e0e2e4"/></svg>
<svg style="left:1581px;top:950px" width="12" height="12"><path d="M0.5 2H2.5M0.5 6H2.5" stroke="#9a9da1" stroke-width="1.6"/><path d="M4.5 1H6.5A3.5 3.5 0 0 1 6.5 8H4.5" stroke="#9a9da1" stroke-width="1.6" fill="none"/><path d="M0 10.5H11" stroke="#9a9da1" stroke-width="1"/></svg>
<svg style="left:1710px;top:955px" width="13" height="13"><path d="M0 12L12 0M4 12L12 4M8 12L12 8" stroke="#6e7175" stroke-width="1"/></svg>
<div class="a" style="left:1630px;top:850px;width:98px;height:26px;background:#fff"></div>
<svg style="left:1620px;top:843px" width="34" height="34"><defs><linearGradient id="og" x1="0" y1="0" x2="0" y2="1"><stop offset="0" stop-color="#f2713f"/><stop offset="1" stop-color="#e8490c"/></linearGradient></defs><g transform="rotate(-14 17 17)"><rect x="3.5" y="4.5" width="26" height="25" rx="4" fill="url(#og)"/><path d="M23 10.8C19.5 8.8 10.5 9 10 12.8C9.5 16.5 23 15.5 22.5 19.8C22 23.5 12.5 23.8 9.5 21.5" stroke="#fff" stroke-width="3.8" fill="none" stroke-linecap="round"/></g></svg>
<svg style="left:1660px;top:856px" width="15" height="15"><rect x="1" y="3.5" width="12" height="6" stroke="#1b6fd1" stroke-width="1.6" fill="none"/><path d="M7 0V14.5" stroke="#1b6fd1" stroke-width="1.8"/></svg>
<svg style="left:1686px;top:858px" width="12" height="12"><circle cx="2.5" cy="3" r="1.6" stroke="#1b6fd1" stroke-width="1.2" fill="none"/><path d="M9.5 6.5C10 8.5 9 10 7.5 11" stroke="#1b6fd1" stroke-width="1.8" fill="none" stroke-linecap="round"/><circle cx="9" cy="6.5" r="1.3" fill="#1b6fd1"/></svg>
<svg style="left:1709px;top:855px" width="13" height="17"><rect x="3.8" y="0.5" width="5.4" height="10" rx="2.7" fill="#1b6fd1"/><path d="M1 7.5A5.5 5.5 0 0 0 12 7.5" stroke="#1b6fd1" stroke-width="1.3" fill="none"/><path d="M6.5 13V15.5M4.5 15.8H8.5" stroke="#1b6fd1" stroke-width="1.3"/></svg>
</body></html>
